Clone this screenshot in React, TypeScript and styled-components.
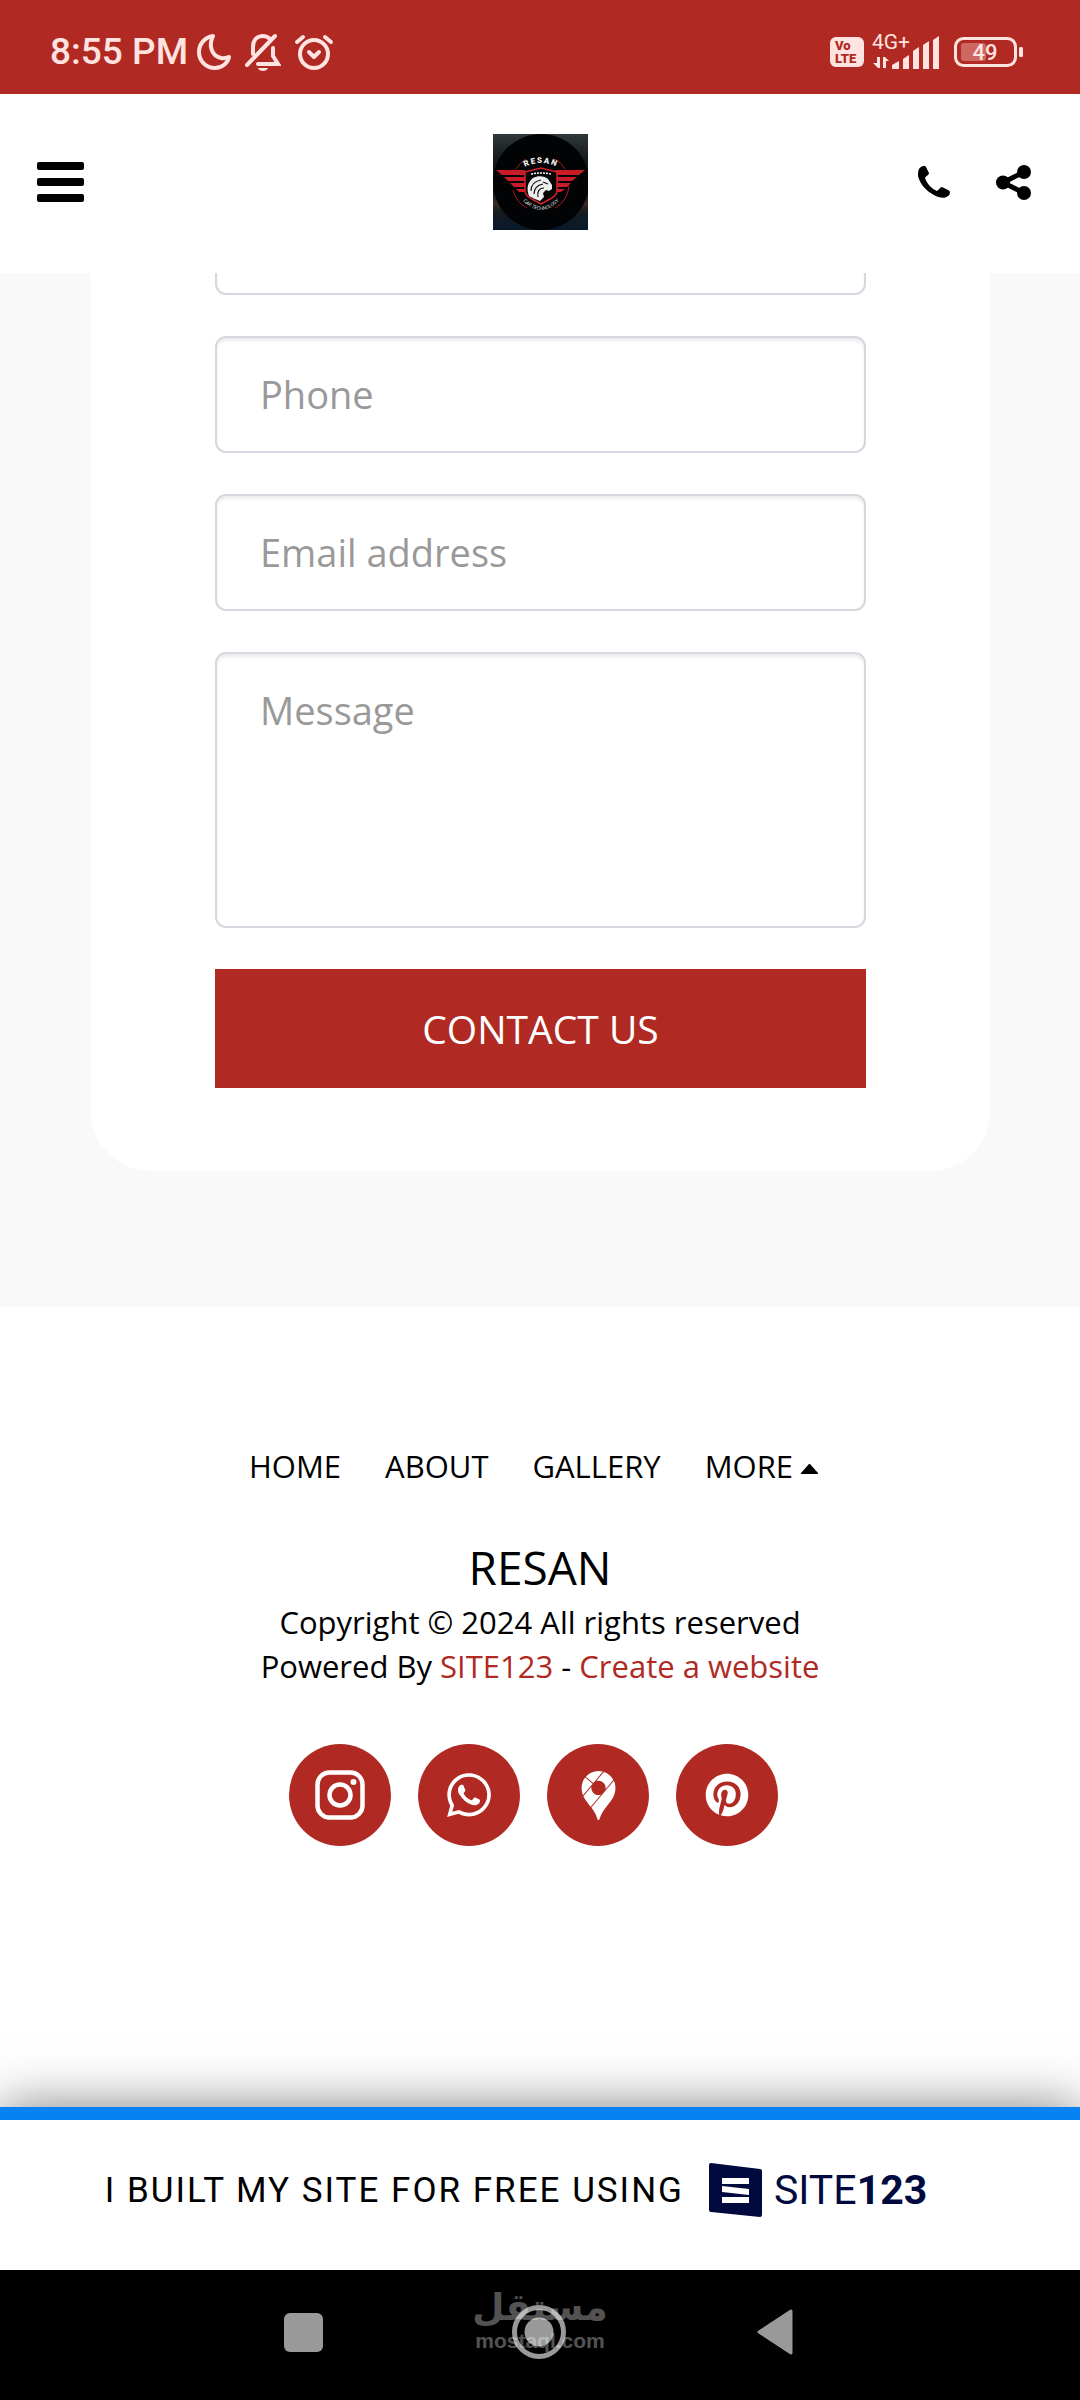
import React from "react";
import styled, { createGlobalStyle } from "styled-components";
import { FaPinterest, FaWhatsapp } from "react-icons/fa";
import { SiGooglemaps } from "react-icons/si";

const red = "#b02a23";
const pale = "#ffe3e0";

const GlobalStyle = createGlobalStyle`
  *, *::before, *::after { box-sizing: border-box; }
  body { margin: 0; background: #fff; color: #000; font-family: "Open Sans", sans-serif; }
  button { border: 0; padding: 0; background: none; color: inherit; font: inherit; cursor: pointer; }
  svg { display: block; flex: none; }
`;

const Page = styled.div`
  min-height: 100vh;
  display: flex;
  flex-direction: column;
`;

const StatusBar = styled.div`
  display: flex;
  align-items: center;
  justify-content: space-between;
  height: 94px;
  padding: 10px 56px 0 50px;
  background: ${red};
  color: ${pale};
  font-family: Roboto, sans-serif;
`;

const StatusGroup = styled.div<{ $gap: number }>`
  display: flex;
  align-items: center;
  gap: ${(p) => p.$gap}px;
`;

const Clock = styled.span`
  font-size: 37px;
  line-height: 44px;
  font-weight: 500;
`;

const VoLte = styled.span`
  display: flex;
  flex-direction: column;
  width: 34px;
  height: 30px;
  padding: 2px 0 0 5px;
  border-radius: 6px;
  background: ${pale};
  color: ${red};
  font: 900 13px/13px Roboto, sans-serif;
`;

const Header = styled.header`
  display: grid;
  grid-template-columns: 1fr auto 1fr;
  align-items: center;
  height: 179px;
  padding: 0 49px 3px 37px;
  background: #fff;
  position: relative;
  z-index: 1;
`;

const MenuButton = styled.button`
  display: flex;
  flex-direction: column;
  gap: 8px;
  width: 47px;
`;

const MenuBar = styled.span`
  height: 8px;
  border-radius: 2px;
  background: #000;
`;

const HeaderActions = styled.div`
  display: flex;
  justify-content: flex-end;
  align-items: center;
  gap: 46px;
`;

const HomeLink = styled.a`
  display: block;
  margin-left: 12px;
`;

const ContactSection = styled.main`
  padding: 0 90px 136px 91px;
  background: #f9f9f9;
  overflow: hidden;
`;

const Card = styled.form`
  display: flex;
  flex-direction: column;
  gap: 41px;
  margin-top: -178px;
  padding: 83px 124px;
  border-radius: 60px;
  background: #fff;
`;

const fieldStyle = `
  display: block;
  width: 100%;
  border: 2px solid #d5d8de;
  border-radius: 11px;
  box-shadow: inset 0 3px 3px rgba(0, 0, 0, 0.075);
  background: #fff;
  color: #000;
  font: 400 38px/52px "Open Sans", sans-serif;
  outline: 0;
  &::placeholder { color: #999; opacity: 1; }
`;

const Field = styled.input`
  ${fieldStyle}
  height: 117px;
  padding: 0 43px 2px;
`;

const MessageField = styled.textarea`
  ${fieldStyle}
  height: 276px;
  padding: 30px 43px;
  resize: none;
`;

const SubmitButton = styled.button`
  height: 119px;
  background: ${red};
  color: #fff;
  font-size: 39px;
  line-height: 52px;
`;

const Footer = styled.footer`
  flex: 1;
  display: flex;
  flex-direction: column;
  align-items: center;
  padding: 137px 24px 0;
  text-align: center;
`;

const FooterNav = styled.nav`
  display: flex;
  gap: 44px;
  padding-right: 13px;
  font-size: 31px;
  line-height: 44px;
`;

const NavLink = styled.a`
  color: #000;
  text-decoration: none;
`;

const MoreButton = styled.button`
  display: flex;
  align-items: center;
  gap: 8px;
`;

const SiteName = styled.h2`
  margin: 46px 0 0;
  font-size: 46px;
  line-height: 66px;
  font-weight: 400;
`;

const FooterText = styled.p`
  margin: 0;
  font-size: 31px;
  line-height: 44px;
`;

const RedLink = styled.a`
  color: ${red};
  text-decoration: none;
`;

const SocialList = styled.div`
  display: flex;
  gap: 27px;
  padding: 56px 13px 0 0;
`;

const SocialLink = styled.a`
  display: flex;
  align-items: center;
  justify-content: center;
  width: 102px;
  height: 102px;
  border-radius: 50%;
  background: ${red};
  color: #fff;
`;

const Banner = styled.a`
  display: flex;
  align-items: center;
  justify-content: center;
  gap: 25px;
  height: 163px;
  padding: 0 48px 10px 0;
  border-top: 13px solid #0583f2;
  box-shadow: 0 0 50px rgba(0, 0, 0, 0.5);
  background: #fff;
  color: #000;
  text-decoration: none;
  font-family: Roboto, sans-serif;
  font-size: 35px;
  letter-spacing: 2px;
  white-space: nowrap;
`;

const BrandMark = styled.span`
  display: flex;
  align-items: center;
  gap: 12px;
  color: #010a3f;
  font-size: 41px;
  letter-spacing: 0;
`;

const SystemNav = styled.div`
  position: relative;
  display: flex;
  align-items: center;
  justify-content: center;
  gap: 182px;
  height: 130px;
  padding: 0 2px 6px 0;
  background: #000;
  color: #999;
`;

const SystemButton = styled.button`
  display: flex;
  justify-content: center;
  width: 54px;
`;

const Watermark = styled.div`
  position: absolute;
  inset: 18px 0 auto;
  display: flex;
  flex-direction: column;
  align-items: center;
  color: #fff;
  opacity: 0.32;
  pointer-events: none;
`;

const WatermarkArabic = styled.span`
  font: 700 37px/40px "DejaVu Sans", sans-serif;
`;

const WatermarkLatin = styled.span`
  font: 700 21px/26px "Liberation Sans", sans-serif;
`;

const ResanLogo = () => (
  <svg width="95" height="96" viewBox="0 0 95 96" role="img" aria-label="Resan">
    <defs>
      <linearGradient id="edge" x1="0" y1="0" x2="0" y2="1">
        <stop offset="0" stopColor="#30383b" />
        <stop offset="0.3" stopColor="#121718" />
        <stop offset="0.6" stopColor="#111" />
        <stop offset="0.72" stopColor="#3b2a22" />
        <stop offset="0.8" stopColor="#161c20" />
        <stop offset="1" stopColor="#08182b" />
      </linearGradient>
      <path id="topArc" d="M18 54a30 25 0 0 1 60 0" />
      <path id="bottomArc" d="M24 60q24 32 48 0" />
    </defs>
    <rect width="95" height="96" fill="url(#edge)" />
    <circle cx="48" cy="48" r="48" fill="#020304" />
    <path d="M23 35a28 28 0 0 1 10-10M62 25a28 28 0 0 1 10 10M20 56a28 28 0 0 0 14 18M76 52a28 28 0 0 1-14 22" fill="none" stroke="#a81c25" strokeWidth="1" />
    <g fill="#c91c28">
      <path d="M3 36h29v5H9zM11 43h21v4H15zM17 49h15v4H21zM23 55h9v3h-6z" />
      <path d="M92 36H62v5h24zM84 43H62v4h17zM78 49H62v4h12zM72 55H62v3h6z" />
    </g>
    <path d="M32 38l16-4 16 4v19c0 6-8 8-16 13-8-5-16-7-16-13z" fill="#050506" stroke="#d2202c" strokeWidth="1.5" />
    <path d="M38 40q10-2 20 0" stroke="#fff" strokeWidth="1.5" strokeDasharray="2 1" fill="none" />
    <path d="M36 62c-3-8-1-14 4-18 5-3 12-2 15 1l4 6v4l-3 2-3-1-3 3 1 4-4 4c-3-1-7-3-11-5z" fill="#eee" />
    <path d="M38 57c0-6 4-10 10-11M41 60c0-6 4-9 9-10M45 63c-1-5 1-9 6-9M50 48l5 2" stroke="#111" strokeWidth="1.2" fill="none" />
    <text fill="#f2f2f2" fontFamily="Roboto, sans-serif" fontWeight="900" fontSize="8" letterSpacing="1.5" textAnchor="middle">
      <textPath href="#topArc" startOffset="50%">RESAN</textPath>
    </text>
    <text fill="#ddd" fontFamily="Roboto, sans-serif" fontStyle="italic" fontSize="5" textAnchor="middle">
      <textPath href="#bottomArc" startOffset="50%">CAR TECHNOLOGY</textPath>
    </text>
  </svg>
);

const MoonIcon = () => (
  <svg width="36" height="38" viewBox="0 0 36 38" fill="none" stroke="currentColor" strokeWidth="4" strokeLinejoin="round">
    <path d="M17 3C9 4 3 11 3 19c0 9 7 16 16 16 7 0 13-5 14-11-3 1-5 2-8 1-9-2-13-12-8-22z" />
  </svg>
);

const BellOffIcon = () => (
  <svg width="36" height="38" viewBox="0 0 36 38" fill="none" stroke="currentColor" strokeWidth="4" strokeLinecap="round">
    <path d="M2 32L30 3" />
    <path d="M8 21v-7C8 7 12 3 18 3c3 0 5 1 7 3M28 15v8l5 8H13" />
    <path d="M13 35h10c-1 4-9 4-10 0z" fill="currentColor" stroke="none" />
  </svg>
);

const AlarmIcon = () => (
  <svg width="40" height="38" viewBox="0 0 40 38" fill="none" stroke="currentColor" strokeWidth="4" strokeLinecap="round" strokeLinejoin="round">
    <circle cx="20" cy="21" r="14" />
    <path d="M15 19l5 5 5-5M3 9l6-5M37 9l-6-5" />
  </svg>
);

const SignalIcon = () => (
  <svg width="68" height="46" viewBox="0 -5 68 46" fill="currentColor">
    <text x="0" y="15" fontFamily="Roboto, sans-serif" fontSize="21">4G+</text>
    <path d="M5 23h3v11h-2l-5-5h4zM11 34h3v-7h3l-4-4h-2z" />
    <path d="M20 35v-4l7-4v8zM31 35V25l6-4v14zM41 35V17l6-4v22zM51 35V11l6-4v28zM61 35V6l6-4v33z" />
  </svg>
);

const BatteryIcon = () => (
  <svg width="70" height="30" viewBox="0 0 70 30">
    <rect x="1.5" y="1.5" width="60" height="27" rx="8" fill="none" stroke={pale} strokeWidth="3" />
    <rect x="7" y="6" width="25" height="18" rx="3" fill="#cd6762" />
    <rect x="65" y="10" width="4" height="10" rx="1.5" fill={pale} />
    <text x="31" y="23" textAnchor="middle" fontFamily="Roboto, sans-serif" fontWeight="500" fontSize="22" fill={pale}>49</text>
  </svg>
);

const PhoneIcon = () => (
  <svg width="32" height="32" viewBox="0 0 32 32">
    <path d="M1 3C3 0 7-1 8 1l3 6c0 2-3 3-4 5 2 6 7 11 12 13 2-1 3-4 5-4l6 3c3 1 2 5 0 6-3 3-9 2-14-1C8 25 2 18 0 10 0 7 0 5 1 3z" />
  </svg>
);

const ShareIcon = () => (
  <svg width="35" height="35" viewBox="0 0 35 35">
    <path d="M28 7L7 17.5 28 28" fill="none" stroke="#000" strokeWidth="5" />
    <circle cx="28" cy="7" r="7" />
    <circle cx="7" cy="17.5" r="7" />
    <circle cx="28" cy="28" r="7" />
  </svg>
);

const InstagramIcon = () => (
  <svg width="50" height="50" viewBox="0 0 50 50" fill="none" stroke="currentColor">
    <rect x="2.5" y="2.5" width="45" height="45" rx="12" strokeWidth="4.5" />
    <circle cx="25" cy="25" r="10.5" strokeWidth="4.5" />
    <circle cx="38.5" cy="12" r="3" fill="currentColor" stroke="none" />
  </svg>
);

const Site123Icon = () => (
  <svg width="53" height="54" viewBox="0 0 53 54">
    <path d="M2 0l49 6q2 0 2 2v44q0 2-2 2L2 49q-2 0-2-2V2q0-2 2-2z" fill="#010a3f" />
    <path d="M13 15h27v6H13zM13 23l27 3v6L13 29zM13 34h27v6H13z" fill="#fff" />
  </svg>
);

export default function App() {
  return (
    <Page>
      <GlobalStyle />
      <StatusBar>
        <StatusGroup $gap={8}>
          <Clock>8:55 PM</Clock>
          <StatusGroup $gap={13}>
            <MoonIcon />
            <BellOffIcon />
            <AlarmIcon />
          </StatusGroup>
        </StatusGroup>
        <StatusGroup $gap={14}>
          <StatusGroup $gap={8}>
            <VoLte>
              <span>Vo</span>
              <span>LTE</span>
            </VoLte>
            <SignalIcon />
          </StatusGroup>
          <BatteryIcon />
        </StatusGroup>
      </StatusBar>

      <Header>
        <MenuButton type="button" aria-label="Menu">
          <MenuBar />
          <MenuBar />
          <MenuBar />
        </MenuButton>
        <HomeLink href="#home">
          <ResanLogo />
        </HomeLink>
        <HeaderActions>
          <button type="button" aria-label="Call"><PhoneIcon /></button>
          <button type="button" aria-label="Share"><ShareIcon /></button>
        </HeaderActions>
      </Header>

      <ContactSection>
        <Card onSubmit={(e) => e.preventDefault()}>
          <Field type="text" aria-label="Name" />
          <Field type="tel" aria-label="Phone" placeholder="Phone" />
          <Field type="email" aria-label="Email address" placeholder="Email address" />
          <MessageField aria-label="Message" placeholder="Message" />
          <SubmitButton type="submit">CONTACT US</SubmitButton>
        </Card>
      </ContactSection>

      <Footer>
        <FooterNav>
          <NavLink href="#home">HOME</NavLink>
          <NavLink href="#about">ABOUT</NavLink>
          <NavLink href="#gallery">GALLERY</NavLink>
          <MoreButton type="button">
            MORE
            <svg width="17" height="16" viewBox="0 0 17 16"><path d="M8 6h1l8 9v1H0v-1z" /></svg>
          </MoreButton>
        </FooterNav>
        <SiteName>RESAN</SiteName>
        <FooterText>Copyright © 2024 All rights reserved</FooterText>
        <FooterText>
          Powered By <RedLink href="#site123">SITE123</RedLink> - <RedLink href="#create">Create a website</RedLink>
        </FooterText>
        <SocialList>
          <SocialLink href="#instagram" aria-label="Instagram"><InstagramIcon /></SocialLink>
          <SocialLink href="#whatsapp" aria-label="WhatsApp"><FaWhatsapp size={50} /></SocialLink>
          <SocialLink href="#map" aria-label="Google Maps"><SiGooglemaps size={49} /></SocialLink>
          <SocialLink href="#pinterest" aria-label="Pinterest"><FaPinterest size={44} /></SocialLink>
        </SocialList>
      </Footer>

      <Banner href="#free">
        <span>I BUILT MY SITE FOR FREE USING</span>
        <BrandMark>
          <Site123Icon />
          <span>SITE<b>123</b></span>
        </BrandMark>
      </Banner>

      <SystemNav>
        <Watermark>
          <WatermarkArabic lang="ar" dir="rtl">مستقل</WatermarkArabic>
          <WatermarkLatin>mostaql.com</WatermarkLatin>
        </Watermark>
        <SystemButton type="button" aria-label="Recent apps">
          <svg width="39" height="39" viewBox="0 0 39 39"><rect width="39" height="39" rx="6" fill="#999" /></svg>
        </SystemButton>
        <SystemButton type="button" aria-label="Home">
          <svg width="54" height="54" viewBox="0 0 54 54">
            <circle cx="27" cy="27" r="24.5" fill="none" stroke="#999" strokeWidth="5" />
            <circle cx="27" cy="27" r="14.5" fill="#999" />
          </svg>
        </SystemButton>
        <SystemButton type="button" aria-label="Back">
          <svg width="37" height="46" viewBox="0 0 37 46">
            <path d="M34 2L2 23l32 21z" fill="#999" stroke="#999" strokeWidth="3" strokeLinejoin="round" />
          </svg>
        </SystemButton>
      </SystemNav>
    </Page>
  );
}
